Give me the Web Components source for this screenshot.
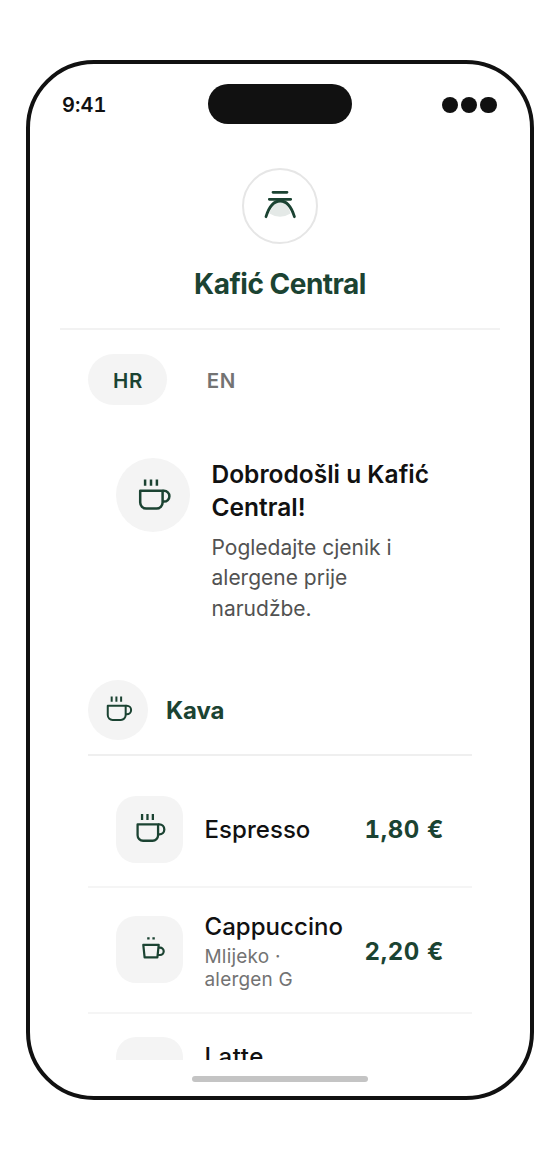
<!DOCTYPE html>
<html lang="hr">
<head>
<meta charset="utf-8">
<title>Kafić Central</title>
<style>
  html, body { margin: 0; background: #fff; }
  body { width: 560px; height: 1160px; font-family: Inter, "Liberation Sans", sans-serif; color: #111; display: flex; justify-content: center; align-items: flex-start; overflow: hidden; }
  phone-frame { margin-top: 60px; }
</style>
</head>
<body>
<phone-frame>
  <status-bar slot="status" time="9:41"></status-bar>
  <brand-header>Kafić Central</brand-header>
  <lang-switch></lang-switch>
  <welcome-card>
    <span slot="title">Dobrodošli u Kafić Central!</span>
    <span slot="text">Pogledajte cjenik i alergene prije narudžbe.</span>
  </welcome-card>
  <menu-section name="Kava">
    <menu-item name="Espresso" price="1,80 €" icon="cup" style="height:114px"></menu-item>
    <menu-item name="Cappuccino" note="Mlijeko · alergen G" price="2,20 €" icon="small" style="height:126px"></menu-item>
    <menu-item class="peek" name="Latte" icon="small" style="height:114px"></menu-item>
  </menu-section>
</phone-frame>
<script>
class Base extends HTMLElement {
  connectedCallback() {
    if (this.shadowRoot) return;
    this.attachShadow({ mode: 'open' }).innerHTML = this.render();
  }
}

customElements.define('cup-icon', class extends Base {
  render() {
    const cup = `<path d="M7.2 15.8H29.6V27.6a6 6 0 0 1-6 6H13.2a6 6 0 0 1-6-6Z"/>
      <path d="M29.6 15.8H31a5.3 5.3 0 0 1 0 10.800H29.6"/>
      <path d="M12.1 4.400v6.400M18 4.400v6.400M23.9 4.400v6.400"/>`;
    const small = `<path d="M13.300 15.800H28.700L27.400 28.400H14.600Z"/>
      <path d="M28.500 18.600H30a3.700 3.700 0 0 1 0 7.400H27.800"/>
      <path d="M17.200 9.300h2.400M22.400 9.300h2.400"/>`;
    const kind = this.getAttribute('kind');
    return `<style>:host{display:block;width:var(--icon,40px);height:var(--icon,40px);margin-bottom:var(--lift,0)}:host([kind="small"]){width:40px;height:40px;margin-bottom:1px}svg{display:block;width:100%;height:100%}</style>
    <svg viewBox="0 0 40 40" fill="none" stroke="#1b4332" stroke-width="${kind === 'small' ? 2.2 : 2.5}" stroke-linejoin="round">${kind === 'small' ? small : cup}</svg>`;
  }
});

customElements.define('phone-frame', class extends Base {
  render() {
    return `<style>
      :host{display:flex;flex-direction:column;box-sizing:border-box;width:508px;height:1040px;border:4px solid #111;border-radius:68px;background:#fff;overflow:hidden}
      main{flex:1;min-height:0;overflow:hidden;padding:0 30px}
      footer{height:36px;flex:none;display:flex;justify-content:center;align-items:flex-start}
      i{width:176px;height:6px;border-radius:3px;background:#c4c4c4;margin-top:16px}
    </style><slot name="status"></slot><main><slot></slot></main><footer><i></i></footer>`;
  }
});

customElements.define('status-bar', class extends Base {
  render() {
    return `<style>
      :host{display:grid;grid-template-columns:1fr 144px 1fr;align-items:center;height:40px;margin-top:20px;padding:0 32px;flex:none}
      b{font-size:20px;font-weight:600;letter-spacing:.1px;font-variant-numeric:tabular-nums;line-height:24px;padding-top:2px}
      .island{height:40px;border-radius:20px;background:#111}
      .dots{display:flex;justify-content:flex-end;gap:3px;padding:1.500px 1.500px 0 0}
      .dots i{width:16.2px;height:16.2px;border-radius:50%;background:#111}
    </style><b>${this.getAttribute('time')}</b><div class="island"></div><div class="dots"><i></i><i></i><i></i></div>`;
  }
});

customElements.define('brand-header', class extends Base {
  render() {
    return `<style>
      :host{display:flex;flex-direction:column;align-items:center;padding-top:44px;box-sizing:border-box;height:206px;border-bottom:2px solid #f2f2f2}
      .logo{width:72px;height:72px;border:2px solid #e6e6e6;border-radius:50%}
      svg{display:block}
      h1{margin:22px 0 0;font-size:28px;line-height:36px;font-weight:700;letter-spacing:-.5px;color:#1b4332}
    </style>
    <div class="logo"><svg width="72" height="72" viewBox="244 170 72 72" fill="none" stroke="#1b4332" stroke-width="2.8" stroke-linecap="round">
      <path d="M280 201C274.500 202 271 208 269.400 213.500Q280 220 290.600 213.500C289 208 285.500 202 280 201Z" fill="#e4e9e7" stroke="none"/>
      <path d="M273 192.300H287M269.300 199.300H290.700"/>
      <path d="M266 216.700C268.500 208.500 273 201 280.200 201S291.900 208.500 294.400 216.700"/>
    </svg></div><h1><slot></slot></h1>`;
  }
});

customElements.define('lang-switch', class extends Base {
  render() {
    return `<style>
      :host{display:flex;gap:15px;padding:24px 28px 0;height:51px}
      button{all:unset;box-sizing:border-box;height:51px;padding:2px 24px 0 25px;border-radius:26px;font-size:20.500px;font-weight:600;letter-spacing:.6px;color:#737373;line-height:50px}
      .on{background:#f4f4f4;color:#1b4332}
    </style><button class="on">HR</button><button>EN</button>`;
  }
});

customElements.define('welcome-card', class extends Base {
  render() {
    return `<style>
      :host{display:flex;gap:21.500px;padding:53px 50px 0 56px;height:222px}
      .badge{width:74px;height:74px;flex:none;border-radius:50%;background:#f4f4f4;display:grid;place-items:center}
      h2{margin:0;font-size:24.500px;line-height:33px;font-weight:600;color:#111}
      p{margin:9px 0 0;font-size:21px;line-height:30.400px;max-width:210px;color:#525252}
    </style><div class="badge"><cup-icon></cup-icon></div><div><h2><slot name="title"></slot></h2><p><slot name="text"></slot></p></div>`;
  }
});

customElements.define('menu-section', class extends Base {
  render() {
    return `<style>
      :host{display:block;padding:0 28px}
      header{display:flex;align-items:flex-start;gap:18px;height:74px;border-bottom:2px solid #efefef;margin-bottom:18px}
      .badge{--icon:32px;--lift:2px;width:60px;height:60px;border-radius:50%;background:#f4f4f4;display:grid;place-items:center}
      h3{margin:0;font-size:24px;font-weight:700;line-height:62px;letter-spacing:-.15px;color:#1b4332}
    </style><header><div class="badge"><cup-icon></cup-icon></div><h3>${this.getAttribute('name')}</h3></header><slot></slot>`;
  }
});

customElements.define('menu-item', class extends Base {
  render() {
    const note = this.getAttribute('note');
    const price = this.getAttribute('price');
    return `<style>
      :host{display:flex;align-items:center;gap:21.500px;box-sizing:border-box;padding:0 28px;border-bottom:2px solid #f5f5f5}
      :host(.peek){align-items:flex-start;padding-top:23px}
      :host(.peek) .info{padding-top:5px}
      :host(.peek) cup-icon{margin-top:9px}
      :host(.peek) .name{letter-spacing:.5px}
      .tile{--icon:36.600px;--lift:3px;width:67px;height:67px;margin-bottom:1px;flex:none;border-radius:20px;background:#f4f4f4;display:grid;place-items:center}
      .info{flex:1;min-width:0}
      .name{font-size:24px;line-height:30px;font-weight:500;letter-spacing:.05px;white-space:nowrap}
      .noted{padding-top:2px}
      .note{font-size:19px;line-height:23px;letter-spacing:.2px;color:#737373;width:120px;margin-top:3px}
      .price{font-size:24px;font-weight:700;letter-spacing:.6px;font-variant-numeric:tabular-nums;color:#1b4332;white-space:nowrap;padding-bottom:2px}
      .noted + .price{padding:2px 0 0}
    </style><div class="tile"><cup-icon kind="${this.getAttribute('icon')}"></cup-icon></div>
    <div class="info ${note ? 'noted' : ''}"><div class="name">${this.getAttribute('name')}</div>${note ? `<div class="note">${note}</div>` : ''}</div>
    ${price ? `<div class="price">${price}</div>` : ''}`;
  }
});
</script>
</body>
</html>
